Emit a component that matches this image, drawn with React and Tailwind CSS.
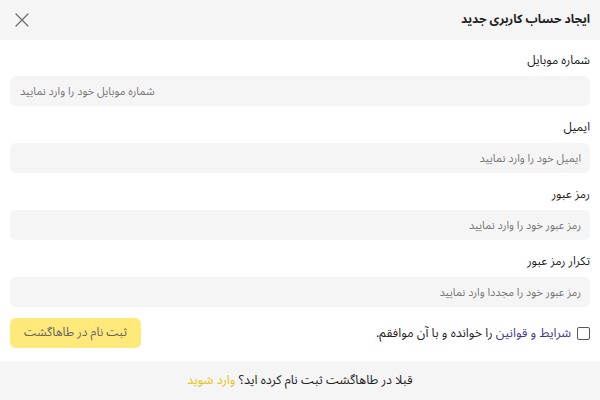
import React from "react";

function Field({ label, placeholder, ltr }) {
  return (
    <div className="flex flex-col">
      <div className="h-5 leading-5 text-[12px] text-[#1a1a1a] mb-[5px]">{label}</div>
      {ltr ? (
        <input
          dir="ltr"
          placeholder={placeholder}
          className="h-[30px] w-full rounded-md bg-[#f5f5f5] text-[11px] outline-none placeholder:text-[#757575] pl-[10px] pr-2 text-left"
        />
      ) : (
        <input
          dir="rtl"
          placeholder={placeholder}
          className="h-[30px] w-full rounded-md bg-[#f5f5f5] text-[11px] outline-none placeholder:text-[#757575] pr-[9px] pl-2 text-right"
        />
      )}
    </div>
  );
}

export default function App() {
  return (
    <div dir="rtl" className="w-[600px] h-[400px] bg-white flex flex-col overflow-hidden font-['Noto_Sans_Arabic','DejaVu_Sans',sans-serif]">
      <div className="h-10 bg-[#f5f5f5] flex items-center justify-between px-[10px] shrink-0">
        <div className="text-[12px] font-bold text-[#1f1f1f]">ایجاد حساب کاربری جدید</div>
        <svg width="14" height="14" viewBox="0 0 14 14" className="ml-[5px]">
          <path d="M1 1L13 13M13 1L1 13" stroke="#6f6f6f" strokeWidth="1.3" strokeLinecap="round" />
        </svg>
      </div>
      <div className="flex-1 px-[10px] pt-[11px] flex flex-col">
        <div className="flex flex-col gap-3">
          <Field label="شماره موبایل" placeholder="شماره موبایل خود را وارد نمایید" ltr />
          <Field label="ایمیل" placeholder="ایمیل خود را وارد نمایید" />
          <Field label="رمز عبور" placeholder="رمز عبور خود را وارد نمایید" />
          <Field label="تکرار رمز عبور" placeholder="رمز عبور خود را مجددا وارد نمایید" />
        </div>
        <div className="mt-[11px] flex items-center justify-between">
          <div className="flex items-center gap-[6px]">
            <div className="w-[13px] h-[13px] border border-[#555] rounded-[2px] bg-white" />
            <div className="text-[12.5px] text-[#1f1f1f]">
              <span className="text-[#3d3a8c]">شرایط و قوانین</span> را خوانده و با آن موافقم.
            </div>
          </div>
          <button className="w-[131px] h-[30px] rounded-md bg-[#fee97a] text-[12px] text-[#666]">
            ثبت نام در طاهاگشت
          </button>
        </div>
      </div>
      <div className="h-[39px] bg-[#f5f5f5] flex items-center justify-center text-[12.5px] text-[#1f1f1f] shrink-0">
        <span>
          قبلا در طاهاگشت ثبت نام کرده اید؟ <span className="text-[#e8c413]">وارد شوید</span>
        </span>
      </div>
    </div>
  );
}
